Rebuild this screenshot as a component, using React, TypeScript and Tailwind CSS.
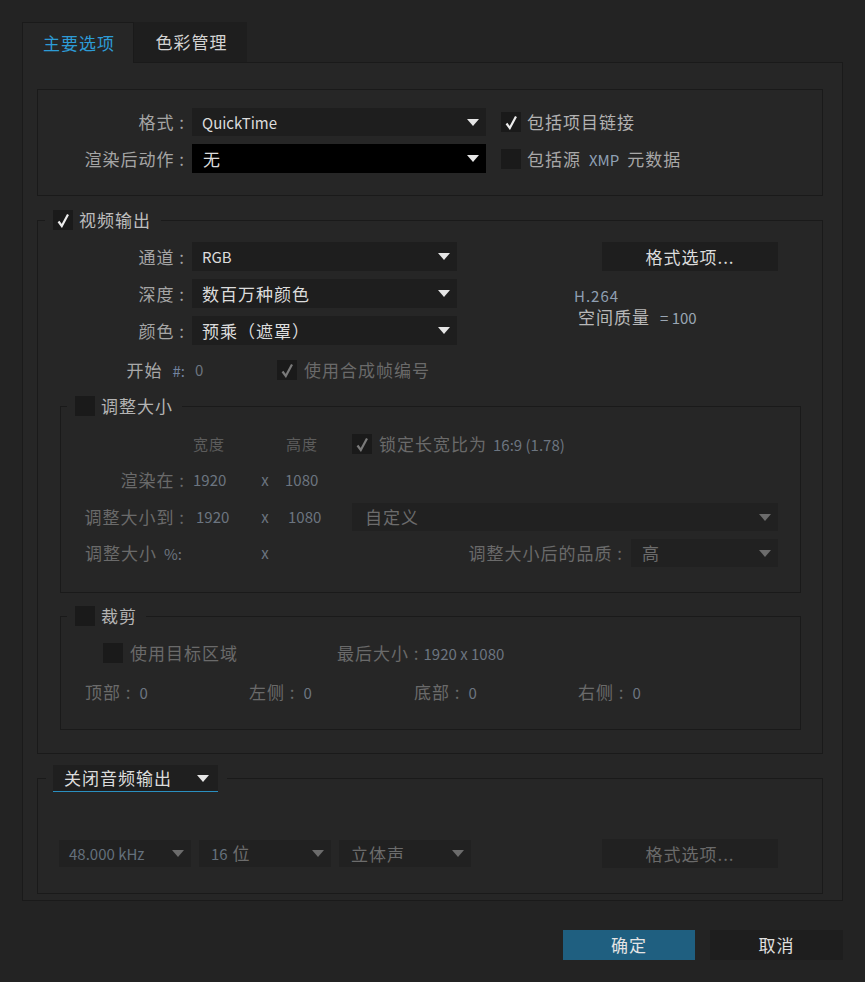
import React from "react";

const cjk = "font-['Noto_Sans_CJK_SC','Noto_Sans',sans-serif]";

function Check({ checked, dim }: { checked?: boolean; dim?: boolean }) {
  return (
    <span className="flex h-5 w-5 shrink-0 items-center justify-center bg-[#1a1a1a]">
      {checked && (
        <svg width="14" height="15" viewBox="0 0 14 15">
          <path
            d="M2.5 8.5 L5.8 13 L12 1.5"
            fill="none"
            stroke={dim ? "#7a7a7a" : "#ececec"}
            strokeWidth="2.2"
          />
        </svg>
      )}
    </span>
  );
}

function Arrow({ dim }: { dim?: boolean }) {
  return (
    <svg width="12" height="7" viewBox="0 0 12 7" className="shrink-0">
      <polygon points="0,0 12,0 6,7" fill={dim ? "#6c6c6c" : "#e6e6e6"} />
    </svg>
  );
}

function Select({
  children,
  className,
  dim,
}: {
  children: React.ReactNode;
  className: string;
  dim?: boolean;
}) {
  return (
    <div className={`flex items-center justify-between pr-[7px] ${className}`}>
      <span className={`whitespace-nowrap leading-6 ${dim ? "text-[#6c6c6c]" : "text-[#dcdcdc]"}`}>{children}</span>
      <Arrow dim={dim} />
    </div>
  );
}

function Label({ children, className = "" }: { children: React.ReactNode; className?: string }) {
  return <span className={`shrink-0 whitespace-nowrap text-right leading-5 ${className}`}>{children}</span>;
}

// latin text inside cjk labels
const num = "text-[15px] tracking-normal";

export default function App() {
  return (
    <div className={`min-h-[982px] w-[865px] bg-[#232323] pl-[22px] pt-[22px] text-[17px] tracking-[1px] ${cjk}`}>
      {/* tabs */}
      <div className="flex h-10 items-start">
        <div className="relative z-10 flex h-[41px] w-[112px] items-center justify-center border-l border-r border-t border-[#1a1a1a] bg-[#262626] pb-px pl-[2px] text-[#2d9bd6]">
          主要选项
        </div>
        <div className="flex h-10 w-[113px] items-center justify-center bg-[#1e1e1e] pl-[2px] text-[#d4d4d4]">
          色彩管理
        </div>
      </div>

      <div className="w-[821px] border border-[#1a1a1a] bg-[#262626] pb-[6px] pl-[14px] pr-[19px] pt-[26px]">
        {/* format box */}
        <div className="border border-[#1a1a1a] pb-[22px] pt-[18px]">
          <div className="flex h-[28px] items-center">
            <Label className="w-[147px] text-[#a5a5a5]">格式 :</Label>
            <Select className="ml-[7px] h-[28px] w-[294px] bg-[#1e1e1e] pl-[10px]">
              <span className={num}>QuickTime</span>
            </Select>
            <div className="ml-[15px] flex items-center gap-[6px]">
              <Check checked />
              <span className="text-[#b2b2b2]">包括项目链接</span>
            </div>
          </div>
          <div className="mt-2 flex h-[29px] items-center">
            <Label className="w-[147px] text-[#a5a5a5]">渲染后动作 :</Label>
            <Select className="ml-[7px] h-[29px] w-[294px] bg-black pl-[11px]">无</Select>
            <div className="ml-[15px] flex items-center gap-[6px]">
              <Check />
              <span className="whitespace-nowrap text-[#a8a8a8]">
                包括源<span className={`mx-[8px] text-[#8fa0b4] ${num}`}>XMP</span>元数据
              </span>
            </div>
          </div>
        </div>

        {/* video output */}
        <fieldset className="mt-[14px] border border-[#1a1a1a] px-0 pb-[23px]">
          <legend className="ml-[7px] pl-2 pr-[10px]">
            <div className="flex h-5 items-center gap-[6px]">
              <Check checked />
              <span className="leading-5 text-[#bdbdbd]">视频输出</span>
            </div>
          </legend>

          <div className="mt-3 flex">
            <div className="flex w-[419px] flex-col gap-2">
              <div className="flex h-[29px] items-center">
                <Label className="w-[147px] text-[#a5a5a5]">通道 :</Label>
                <Select className="ml-[7px] h-[29px] w-[265px] bg-[#1e1e1e] pl-[10px]">
                  <span className={num}>RGB</span>
                </Select>
              </div>
              <div className="flex h-[29px] items-center">
                <Label className="w-[147px] text-[#a5a5a5]">深度 :</Label>
                <Select className="ml-[7px] h-[29px] w-[265px] bg-[#1e1e1e] pl-[10px]">数百万种颜色</Select>
              </div>
              <div className="flex h-[29px] items-center">
                <Label className="w-[147px] text-[#a5a5a5]">颜色 :</Label>
                <Select className="ml-[7px] h-[29px] w-[265px] bg-[#1e1e1e] pl-[10px]">预乘（遮罩）</Select>
              </div>
            </div>
            <div className="ml-[117px] flex flex-col">
              <button className="ml-[28px] flex h-[29px] w-[176px] items-center justify-center bg-[#1e1e1e] text-[#dcdcdc]">
                格式选项...
              </button>
              <div className="mt-[17px] text-[15px] leading-4 text-[#8f9fb2]">H.264</div>
              <div className="ml-[4px] mt-[3px] whitespace-nowrap leading-5 text-[#b8b8b8]">
                空间质量<span className={`ml-[10px] text-[#9aa6b4] ${num}`}>= 100</span>
              </div>
            </div>
          </div>

          <div className="mt-[15px] flex h-5 items-center">
            <Label className="w-[147px] text-[#a8a8a8]">
              开始<span className={`ml-[10px] text-[#7384a0] ${num}`}>#:</span>
            </Label>
            <span className={`ml-[10px] w-[82px] text-[#6c7580] ${num}`}>0</span>
            <Check checked dim />
            <span className="ml-[7px] leading-5 text-[#6a6a6a]">使用合成帧编号</span>
          </div>

          {/* resize */}
          <fieldset className="ml-[22px] mr-[21px] mt-[16px] border border-[#1a1a1a] px-0 pb-[25px]">
            <legend className="ml-[6px] pl-2 pr-[9px]">
              <div className="flex h-5 items-center gap-[6px]">
                <Check />
                <span className="leading-5 text-[#b4b4b4]">调整大小</span>
              </div>
            </legend>

            <div className="mt-[18px] flex h-5 items-center text-[15px] text-[#5c5c5c]">
              <span className="w-[124px]" />
              <span className="ml-[8px] w-[59px]">宽度</span>
              <span className="w-[26px]" />
              <span className="ml-[8px] w-[59px]">高度</span>
              <div className="ml-[7px] flex items-center gap-[7px]">
                <Check checked dim />
                <span className="whitespace-nowrap text-[17px] leading-5 text-[#6a6a6a]">
                  锁定长宽比为<span className={`ml-[6px] text-[#6c7580] ${num}`}>16:9 (1.78)</span>
                </span>
              </div>
            </div>

            <div className="mt-[12px] flex h-[28px] items-center text-[#6a6a6a]">
              <Label className="w-[124px]">渲染在 :</Label>
              <span className={`ml-[8px] w-[59px] text-[#6c7580] ${num}`}>1920</span>
              <span className={`w-[26px] text-center text-[#6c7580] ${num}`}>x</span>
              <span className={`ml-[7px] w-[60px] text-[#6c7580] ${num}`}>1080</span>
            </div>

            <div className="mt-[9px] flex h-[28px] items-center text-[#6a6a6a]">
              <Label className="w-[124px]">调整大小到 :</Label>
              <span className={`ml-[11px] w-[56px] text-[#6c7580] ${num}`}>1920</span>
              <span className={`w-[26px] text-center text-[#6c7580] ${num}`}>x</span>
              <span className={`ml-[10px] w-[57px] text-[#6c7580] ${num}`}>1080</span>
              <Select dim className="ml-[7px] h-[28px] w-[426px] bg-[#212121] pl-[13px]">
                自定义
              </Select>
            </div>

            <div className="mt-[8px] flex h-[28px] items-center text-[#6a6a6a]">
              <Label className="w-[121px]">
                调整大小<span className={`ml-[7px] text-[#6c7580] ${num}`}>%:</span>
              </Label>
              <span className="ml-[11px] w-[59px]" />
              <span className={`w-[26px] text-center text-[#6c7580] ${num}`}>x</span>
              <Label className="ml-auto">调整大小后的品质 :</Label>
              <Select dim className="ml-[8px] mr-[22px] h-[28px] w-[147px] bg-[#212121] pl-[11px]">
                高
              </Select>
            </div>
          </fieldset>

          {/* crop */}
          <fieldset className="ml-[22px] mr-[21px] mt-[13px] border border-[#1a1a1a] px-0 pb-[27px]">
            <legend className="ml-[6px] pl-2 pr-[9px]">
              <div className="flex h-5 items-center gap-[6px]">
                <Check />
                <span className="leading-5 text-[#b4b4b4]">裁剪</span>
              </div>
            </legend>

            <div className="mt-[17px] flex h-5 items-center text-[#6a6a6a]">
              <span className="ml-[42px]">
                <Check />
              </span>
              <span className="ml-[7px] w-[207px] leading-5">使用目标区域</span>
              <span className="whitespace-nowrap leading-5">
                最后大小 :<span className={`ml-[4px] text-[#6c7580] ${num}`}>1920 x 1080</span>
              </span>
            </div>

            <div className="ml-[24px] mt-[19px] grid h-5 grid-cols-[164px_165px_164px_164px] items-center text-[#6a6a6a]">
              {["顶部", "左侧", "底部", "右侧"].map((s) => (
                <span key={s} className="whitespace-nowrap leading-5">
                  {s} :<span className={`ml-[8px] text-[#6c7580] ${num}`}>0</span>
                </span>
              ))}
            </div>
          </fieldset>
        </fieldset>

        {/* audio */}
        <fieldset className="mt-[11px] border border-[#1a1a1a] px-0 pb-[25px]">
          <legend className="ml-[8px] pl-[7px] pr-[9px]">
            <div className="flex h-[27px] w-[165px] items-center justify-between border-b border-[#2a8fc0] bg-[#1f1f1f] pl-[11px] pr-[9px]">
              <span className="leading-5 text-[#dcdcdc]">关闭音频输出</span>
              <Arrow />
            </div>
          </legend>

          <div className="ml-[21px] mt-[47px] flex items-center">
            <Select dim className="h-[27px] w-[132px] bg-[#212121] pl-[10px]">
              <span className={`text-[#64707c] ${num}`}>48.000 kHz</span>
            </Select>
            <Select dim className="ml-[8px] h-[27px] w-[132px] bg-[#212121] pl-[12px]">
              <span className={`text-[#64707c] ${num}`}>16</span> 位
            </Select>
            <Select dim className="ml-[8px] h-[27px] w-[132px] bg-[#212121] pl-[12px]">
              立体声
            </Select>
            <button className="ml-[131px] flex h-[29px] w-[176px] items-center justify-center bg-[#212121] text-[#6a6a6a]">
              格式选项...
            </button>
          </div>
        </fieldset>
      </div>

      {/* buttons */}
      <div className="mt-[29px] flex w-[821px] justify-end">
        <button className="h-[30px] w-[132px] bg-[#1f5f80] text-[#e4e4e4]">确定</button>
        <button className="ml-[15px] h-[30px] w-[133px] bg-[#1e1e1e] text-[#e0e0e0]">取消</button>
      </div>
    </div>
  );
}
